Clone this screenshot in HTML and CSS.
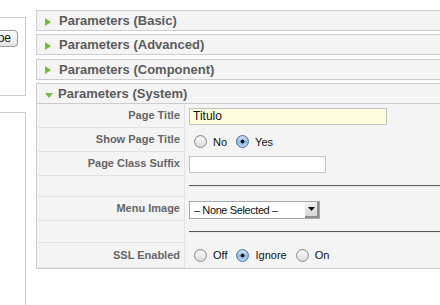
FILE: index.html
```html
<!DOCTYPE html>
<html>
<head>
<meta charset="utf-8">
<link rel="stylesheet" href="styles.css">
</head>
<body>
<div class="page">
  <aside class="side">
    <div class="sidebox sidebox-top"><span class="btn">Type</span></div>
    <div class="sidebox sidebox-bottom"></div>
  </aside>
  <main class="panes">
    <div class="pane">
      <h3 class="toggler"><span class="arrow arrow-right"></span>Parameters (Basic)</h3>
    </div>
    <div class="pane">
      <h3 class="toggler"><span class="arrow arrow-right"></span>Parameters (Advanced)</h3>
    </div>
    <div class="pane">
      <h3 class="toggler"><span class="arrow arrow-right"></span>Parameters (Component)</h3>
    </div>
    <div class="pane pane-open">
      <h3 class="toggler"><span class="arrow arrow-down"></span>Parameters (System)</h3>
      <div class="paramlist">
        <div class="key">Page Title</div>
        <div class="val"><input class="text text-title" type="text" value="Titulo"></div>

        <div class="key">Show Page Title</div>
        <div class="val val-radios val-shift">
          <input class="radio" type="radio" name="spt"><label class="rlabel">No</label>
          <input class="radio" type="radio" name="spt" checked><label class="rlabel">Yes</label>
        </div>

        <div class="key">Page Class Suffix</div>
        <div class="val"><input class="text text-suffix" type="text" value=""></div>

        <div class="key"></div>
        <div class="val"><div class="rule"></div></div>

        <div class="key">Menu Image</div>
        <div class="val">
          <div class="select"><span class="select-text">– None Selected –</span><span class="select-btn"><svg width="7" height="4" viewBox="0 0 7 4"><path d="M0 0h7L3.5 4z" fill="#111"/></svg></span></div>
        </div>

        <div class="key"></div>
        <div class="val"><div class="rule"></div></div>

        <div class="key">SSL Enabled</div>
        <div class="val val-radios">
          <input class="radio" type="radio" name="ssl"><label class="rlabel">Off</label>
          <input class="radio" type="radio" name="ssl" checked><label class="rlabel">Ignore</label>
          <input class="radio" type="radio" name="ssl"><label class="rlabel">On</label>
        </div>
      </div>
    </div>
  </main>
</div>
</body>
</html>
```
FILE: styles.css
```css
html, body {
  margin: 0;
  padding: 0;
  overflow: hidden;
  background: #fff;
  font-family: "Liberation Sans", Arial, sans-serif;
}

.page {
  display: flex;
  align-items: flex-start;
  width: 520px;
  height: 305px;
}

.side {
  width: 26px;
  flex-shrink: 0;
  display: flex;
  flex-direction: column;
}

.sidebox {
  box-sizing: border-box;
  width: 26px;
  border: 1px solid #cccccc;
  border-left: none;
  background: #fff;
  overflow: hidden;
  display: flex;
  justify-content: flex-end;
  align-items: flex-start;
}

.sidebox-top {
  margin-top: 17px;
  height: 79px;
  padding: 12px 7px 0 0;
}

.sidebox-bottom {
  margin-top: 16px;
  height: 220px;
}

.btn {
  flex-shrink: 0;
  box-sizing: border-box;
  height: 17px;
  padding: 0 6px 0 8px;
  border: 1px solid #9a9a9a;
  border-radius: 4px;
  background: linear-gradient(#ffffff, #e4e4e4);
  font-size: 12px;
  line-height: 15px;
  color: #111;
}

.panes {
  margin-left: 10px;
  margin-top: 10px;
  width: 470px;
  flex-shrink: 0;
}

.pane {
  margin-bottom: 3.33px;
}

.toggler {
  margin: 0;
  box-sizing: border-box;
  height: 21px;
  border: 1px solid #cccccc;
  border-right: none;
  background: #f4f4f4;
  display: flex;
  align-items: center;
  padding-left: 8px;
  font-size: 13px;
  font-weight: bold;
  color: #5c5c5c;
}

.arrow {
  width: 0;
  height: 0;
  flex-shrink: 0;
}

.arrow-right {
  border-left: 6px solid #74bb45;
  border-top: 4.5px solid transparent;
  border-bottom: 4.5px solid transparent;
  margin-right: 8px;
  margin-top: 2px;
}

.arrow-down {
  border-top: 5px solid #74bb45;
  border-left: 4.5px solid transparent;
  border-right: 4.5px solid transparent;
  margin-right: 5px;
  margin-top: 4px;
}

.pane-open .toggler {
  border-bottom: 1px solid #cccccc;
}

.paramlist {
  display: grid;
  grid-template-columns: 147px 1fr;
  grid-template-rows: 24px 24px 24px 21px 24px 22px 25px;
  padding-left: 1px;
  border-left: 1px solid #cccccc;
  border-bottom: 1px solid #cccccc;
  background: #f4f4f4;
}

.key {
  box-sizing: border-box;
  border-bottom: 1px solid #e3e3e3;
  border-right: 1px solid #e3e3e3;
  display: flex;
  align-items: center;
  justify-content: flex-end;
  padding-right: 4px;
  font-size: 11px;
  font-weight: bold;
  color: #666666;
}

.val {
  display: flex;
  align-items: center;
  padding-left: 4px;
  font-size: 11px;
  color: #111;
}

.val-radios {
  padding-left: 9px;
}

.val-shift {
  padding-top: 4px;
}

.text {
  box-sizing: border-box;
  height: 17px;
  margin: 1px 0 0 0;
  padding: 0 3px;
  border: 1px solid #c4c4c4;
  font-family: "Liberation Sans", Arial, sans-serif;
  font-size: 12px;
  color: #111;
  outline: none;
}

.text-title {
  width: 198px;
  background: #ffffdd;
}

.text-suffix {
  width: 137px;
  background: #ffffff;
}

.rule {
  flex: 1;
  height: 0;
  border-top: 1px solid #5a5a5a;
  border-bottom: 1px solid #e8e8e8;
}

.select {
  box-sizing: border-box;
  width: 131px;
  height: 18px;
  margin-top: 2px;
  border: 1px solid #a8a8a8;
  background: #fff;
  display: flex;
  align-items: stretch;
}

.select-text {
  flex: 1;
  padding-left: 4px;
  font-size: 11px;
  letter-spacing: -0.4px;
  line-height: 16px;
  color: #111;
  white-space: nowrap;
  overflow: hidden;
}

.select-btn {
  width: 14px;
  box-sizing: border-box;
  border-right: 2px solid #8c8c8c;
  border-bottom: 2px solid #8c8c8c;
  background: linear-gradient(#f2f2f2, #d4d4d4);
  display: flex;
  align-items: center;
  justify-content: center;
}

.radio {
  appearance: none;
  -webkit-appearance: none;
  box-sizing: border-box;
  width: 13px;
  height: 13px;
  margin: 0 6px 0 0;
  border-radius: 50%;
  border: 1px solid #8c8c8c;
  background: linear-gradient(#fefefe, #d9d9d9);
  box-shadow: inset 0 1px 1px rgba(0, 0, 0, 0.12);
  flex-shrink: 0;
}

.radio:checked {
  border-color: #50739c;
  background:
    radial-gradient(circle, #151515 0, #151515 1.7px, transparent 2.3px),
    linear-gradient(#dcecfb, #8bbbe8 55%, #b5d7f7);
}

.rlabel {
  margin-right: 9px;
  font-size: 11px;
  color: #111;
}
```
